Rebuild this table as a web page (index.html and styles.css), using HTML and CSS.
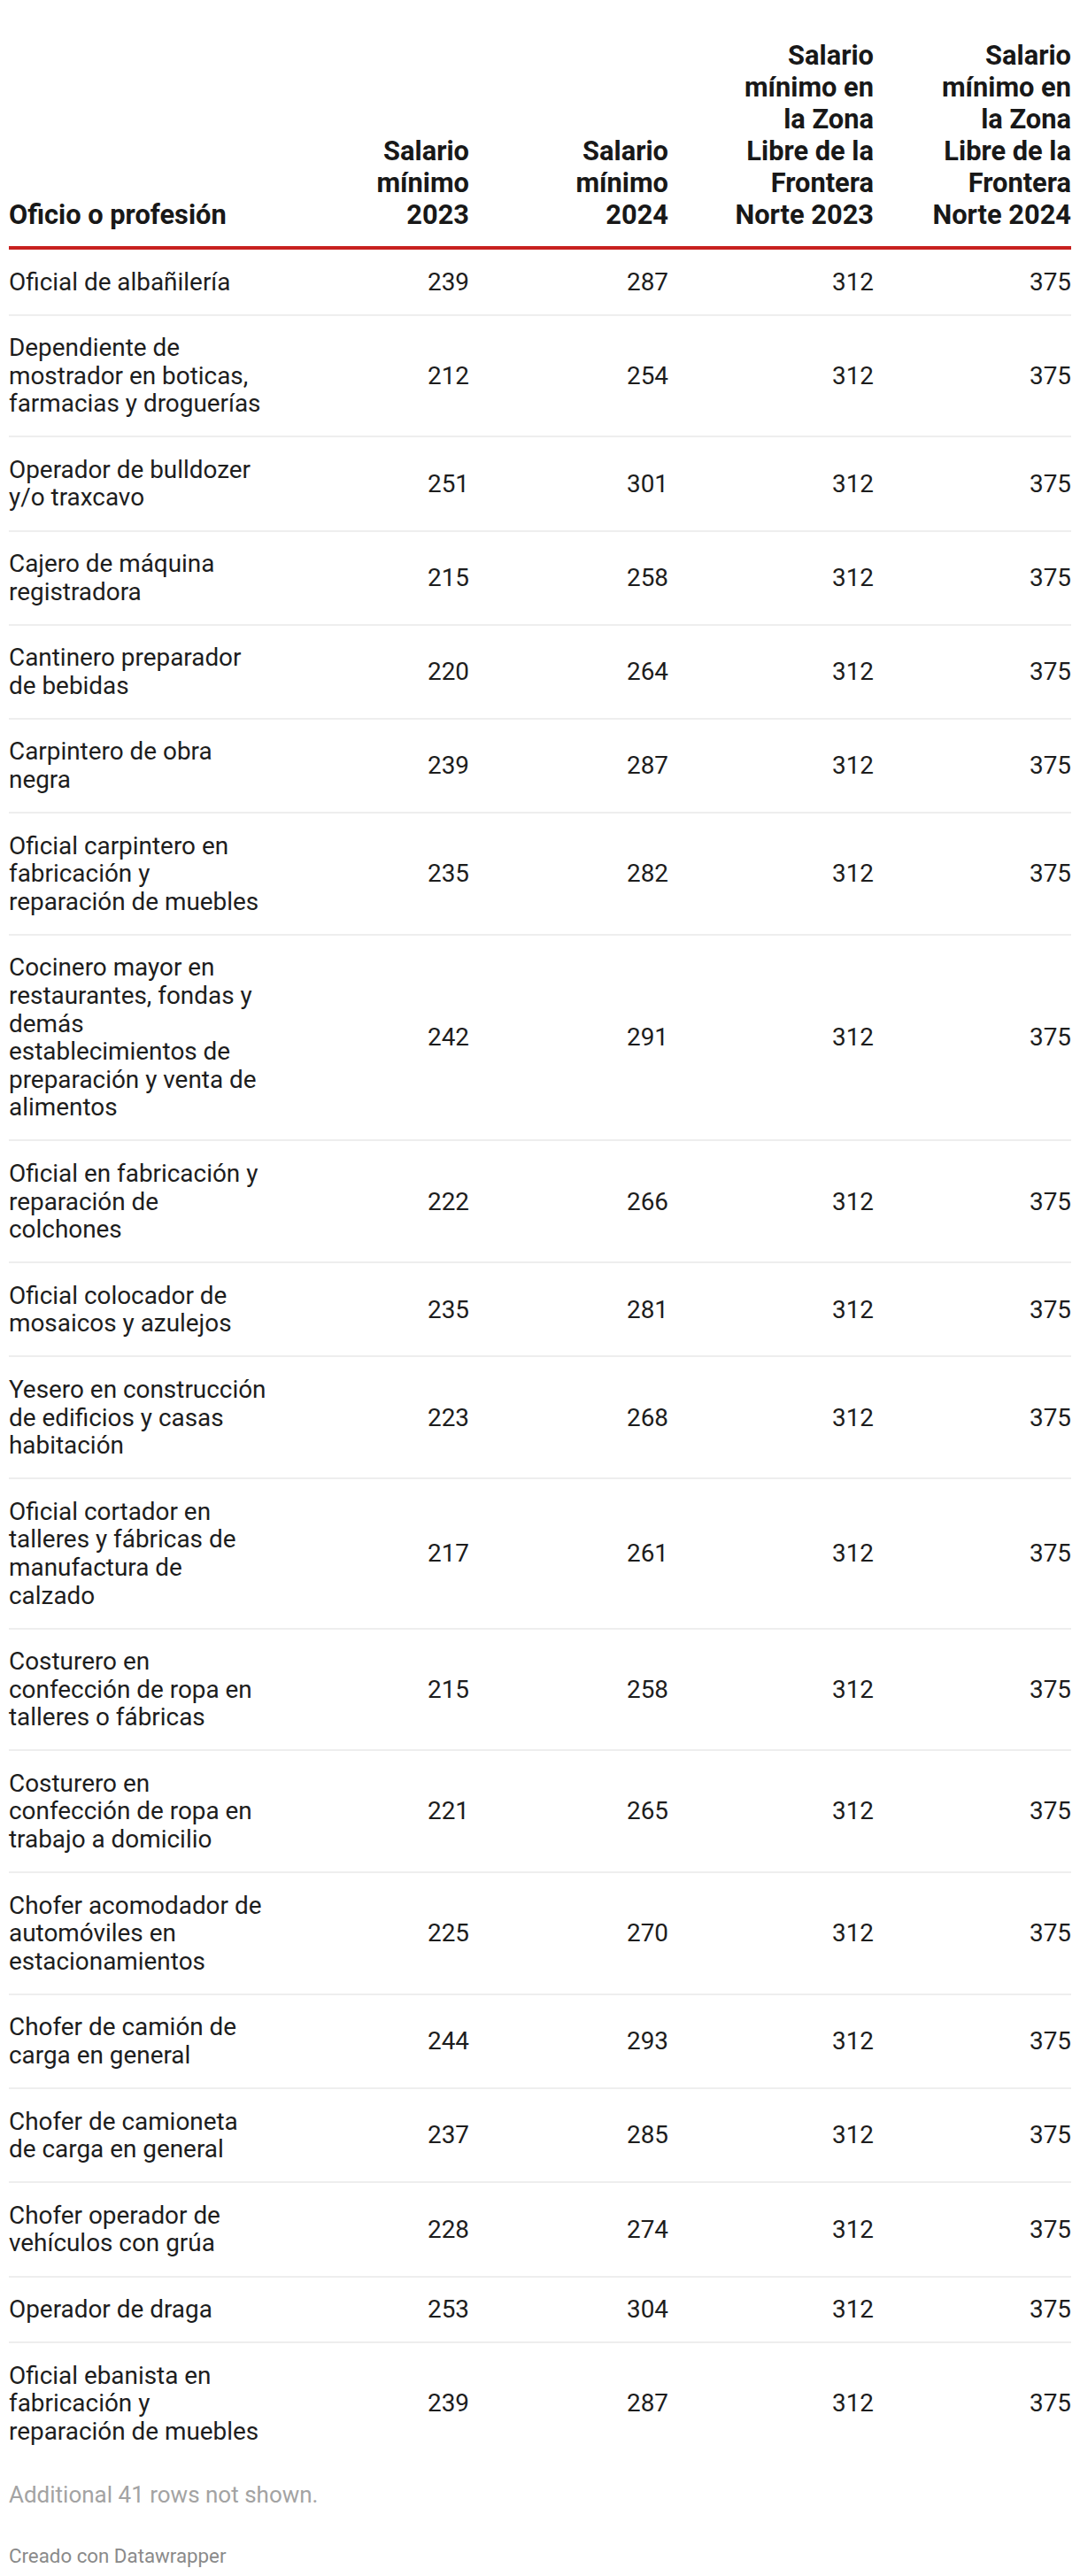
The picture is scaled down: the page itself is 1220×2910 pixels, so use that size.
FILE: index.html
```html
<!DOCTYPE html>
<html lang="es">
<head>
<meta charset="utf-8">
<title>Salario mínimo por oficio</title>
<link rel="stylesheet" href="styles.css">
</head>
<body>
<div class="wrap">
  <div class="table">
    <div class="row head">
      <div class="th first">Oficio o profesión</div>
      <div class="th"><span>Salario mínimo 2023</span></div>
      <div class="th"><span>Salario mínimo 2024</span></div>
      <div class="th"><span>Salario mínimo en la Zona Libre de la Frontera Norte 2023</span></div>
      <div class="th"><span>Salario mínimo en la Zona Libre de la Frontera Norte 2024</span></div>
    </div>
    <div class="row"><div class="td first">Oficial de albañilería</div><div class="td">239</div><div class="td">287</div><div class="td">312</div><div class="td">375</div></div>
    <div class="row"><div class="td first">Dependiente de mostrador en boticas, farmacias y droguerías</div><div class="td">212</div><div class="td">254</div><div class="td">312</div><div class="td">375</div></div>
    <div class="row"><div class="td first">Operador de bulldozer y/o traxcavo</div><div class="td">251</div><div class="td">301</div><div class="td">312</div><div class="td">375</div></div>
    <div class="row"><div class="td first">Cajero de máquina registradora</div><div class="td">215</div><div class="td">258</div><div class="td">312</div><div class="td">375</div></div>
    <div class="row"><div class="td first">Cantinero preparador de bebidas</div><div class="td">220</div><div class="td">264</div><div class="td">312</div><div class="td">375</div></div>
    <div class="row"><div class="td first">Carpintero de obra negra</div><div class="td">239</div><div class="td">287</div><div class="td">312</div><div class="td">375</div></div>
    <div class="row"><div class="td first">Oficial carpintero en fabricación y reparación de muebles</div><div class="td">235</div><div class="td">282</div><div class="td">312</div><div class="td">375</div></div>
    <div class="row"><div class="td first">Cocinero mayor en restaurantes, fondas y demás establecimientos de preparación y venta de alimentos</div><div class="td">242</div><div class="td">291</div><div class="td">312</div><div class="td">375</div></div>
    <div class="row"><div class="td first">Oficial en fabricación y reparación de colchones</div><div class="td">222</div><div class="td">266</div><div class="td">312</div><div class="td">375</div></div>
    <div class="row"><div class="td first">Oficial colocador de mosaicos y azulejos</div><div class="td">235</div><div class="td">281</div><div class="td">312</div><div class="td">375</div></div>
    <div class="row"><div class="td first">Yesero en construcción de edificios y casas habitación</div><div class="td">223</div><div class="td">268</div><div class="td">312</div><div class="td">375</div></div>
    <div class="row"><div class="td first">Oficial cortador en talleres y fábricas de manufactura de calzado</div><div class="td">217</div><div class="td">261</div><div class="td">312</div><div class="td">375</div></div>
    <div class="row"><div class="td first">Costurero en confección de ropa en talleres o fábricas</div><div class="td">215</div><div class="td">258</div><div class="td">312</div><div class="td">375</div></div>
    <div class="row"><div class="td first">Costurero en confección de ropa en trabajo a domicilio</div><div class="td">221</div><div class="td">265</div><div class="td">312</div><div class="td">375</div></div>
    <div class="row"><div class="td first">Chofer acomodador de automóviles en estacionamientos</div><div class="td">225</div><div class="td">270</div><div class="td">312</div><div class="td">375</div></div>
    <div class="row"><div class="td first">Chofer de camión de carga en general</div><div class="td">244</div><div class="td">293</div><div class="td">312</div><div class="td">375</div></div>
    <div class="row"><div class="td first">Chofer de camioneta de carga en general</div><div class="td">237</div><div class="td">285</div><div class="td">312</div><div class="td">375</div></div>
    <div class="row"><div class="td first">Chofer operador de vehículos con grúa</div><div class="td">228</div><div class="td">274</div><div class="td">312</div><div class="td">375</div></div>
    <div class="row"><div class="td first">Operador de draga</div><div class="td">253</div><div class="td">304</div><div class="td">312</div><div class="td">375</div></div>
    <div class="row last"><div class="td first">Oficial ebanista en fabricación y reparación de muebles</div><div class="td">239</div><div class="td">287</div><div class="td">312</div><div class="td">375</div></div>
  </div>
  <p class="note">Additional 41 rows not shown.</p>
  <p class="credit">Creado con Datawrapper</p>
</div>
</body>
</html>
```
FILE: styles.css
```css
html, body {
  margin: 0;
  padding: 0;
  background: #ffffff;
}
body {
  font-family: Roboto, "Liberation Sans", Arial, sans-serif;
  color: #1d1d1d;
}
.wrap {
  padding: 0 10px;
}
.row {
  display: grid;
  grid-template-columns: 300px 220px 225px 232px 223px;
  align-items: center;
  border-bottom: 2px solid #eeeeee;
}
.row.last {
  border-bottom: none;
}
.row.head {
  align-items: end;
  border-bottom: 4px solid #c8201f;
  padding: 44.5px 0 17.5px;
}
.th {
  font-weight: 700;
  font-size: 30.8px;
  line-height: 36px;
  color: #181818;
  text-align: right;
}
.th span {
  display: block;
  max-width: 166px;
  margin-left: auto;
}
.th.first {
  text-align: left;
}
.td {
  font-size: 27.9px;
  line-height: 31.6px;
  text-align: right;
  padding: 20.5px 0;
}
.td.first {
  text-align: left;
  padding-right: 9px;
}
.note {
  margin: 20.5px 0 0;
  font-size: 26px;
  line-height: 31.2px;
  color: #a3a3a3;
}
.credit {
  margin: 39px 0 0;
  font-size: 22.3px;
  line-height: 26.8px;
  color: #8a8a8a;
}
```
